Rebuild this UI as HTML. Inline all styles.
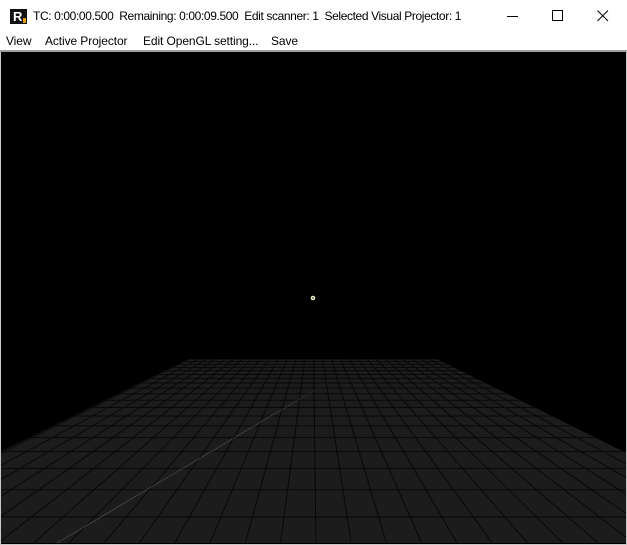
<!DOCTYPE html>
<html><head><style>
html,body{margin:0;padding:0;width:627px;height:545px;overflow:hidden;background:#fff;font-family:"Liberation Sans",sans-serif;}
.title{position:absolute;left:0;top:0;width:627px;height:30px;background:#fff;}
.t{position:absolute;top:9px;font-size:12px;color:#000;white-space:nowrap;letter-spacing:-0.38px}
.menu{position:absolute;top:34px;font-size:12px;color:#000;white-space:nowrap;letter-spacing:-0.1px}
</style></head><body>
<div class="title">
<div style="position:absolute;left:10px;top:9px;width:17px;height:15px;background:#111;"></div>
<div style="position:absolute;left:13px;top:9px;font:bold 13px 'Liberation Sans',sans-serif;color:#fff;">R</div>
<div style="position:absolute;left:23px;top:18px;width:3px;height:5px;background:#e8a000;"></div>
<div class="t" style="left:33px">TC: 0:00:00.500&nbsp; Remaining: 0:00:09.500&nbsp; Edit scanner: 1&nbsp; Selected Visual Projector: 1</div>
<div style="position:absolute;left:507px;top:16px;width:11px;height:1px;background:#000"></div>
<div style="position:absolute;left:552px;top:10px;width:9px;height:9px;border:1px solid #000"></div>
<svg style="position:absolute;left:597px;top:10px" width="12" height="12"><path d="M0.5 0.5L11 11M11 0.5L0.5 11" stroke="#000" stroke-width="1"/></svg>
</div>
<div class="menu" style="left:6px">View</div>
<div class="menu" style="left:45px">Active Projector</div>
<div class="menu" style="left:143px">Edit OpenGL setting...</div>
<div class="menu" style="left:271px">Save</div>
<svg style="position:absolute;left:0;top:0" width="627" height="545">
<defs><clipPath id="c"><rect x="1" y="52" width="625" height="492"/></clipPath>
<clipPath id="f"><polygon points="188,359 437,359 808,543 -183,543"/></clipPath>
<linearGradient id="g" x1="57" y1="543" x2="330" y2="381" gradientUnits="userSpaceOnUse"><stop offset="0" stop-color="#6a6a6a"/><stop offset="0.8" stop-color="#555"/><stop offset="1" stop-color="#1c1c1c"/></linearGradient></defs>
<rect x="0" y="50" width="627" height="2" fill="#a0a0a0"/>
<rect x="1" y="52" width="625" height="492" fill="#000"/>
<g clip-path="url(#c)">
<polygon points="188,359 437,359 808,543 -183,543" fill="#1c1c1c"/>
<g clip-path="url(#f)" stroke="#080808" stroke-width="1">
<path d="M0 359H627M0 361.6H627M0 364.4H627M0 367.4H627M0 370.8H627M0 374.5H627M0 378.5H627M0 383H627M0 388.1H627M0 393.8H627M0 400.2H627M0 407.5H627M0 416H627M0 425.9H627M0 437.6H627M0 451.6H627M0 468.4H627M0 489.7H627M0 517H627"/>
<path d="M189.2 359L-178.2 543M198.1 359L-142.9 543M207 359L-107.6 543M215.9 359L-72.3 543M224.8 359L-37 543M233.7 359L-1.8 543M242.6 359L33.5 543M251.5 359L68.8 543M260.3 359L104.1 543M269.2 359L139.4 543M278.1 359L174.7 543M287 359L210 543M295.9 359L245.3 543M304.8 359L280.6 543M313.7 359L315.9 543M322.6 359L351.2 543M331.5 359L386.4 543M340.4 359L421.7 543M349.3 359L457 543M358.2 359L492.3 543M367.1 359L527.6 543M375.9 359L562.9 543M384.8 359L598.2 543M393.7 359L633.5 543M402.6 359L668.8 543M411.5 359L704.1 543M420.4 359L739.3 543M429.3 359L774.6 543M438.2 359L809.9 543"/>
</g>
<path d="M57 543L330 381" stroke="url(#g)" stroke-width="0.7" stroke-dasharray="1.5 0.7"/>
</g>
<circle cx="313" cy="298" r="1.6" fill="#333" stroke="#f0f0c8" stroke-width="1.4"/>
<rect x="0" y="52" width="1" height="493" fill="#c8c8c8"/>
<rect x="626" y="52" width="1" height="493" fill="#c8c8c8"/>
<rect x="0" y="544" width="627" height="1" fill="#c8c8c8"/>
</svg>
</body></html>
